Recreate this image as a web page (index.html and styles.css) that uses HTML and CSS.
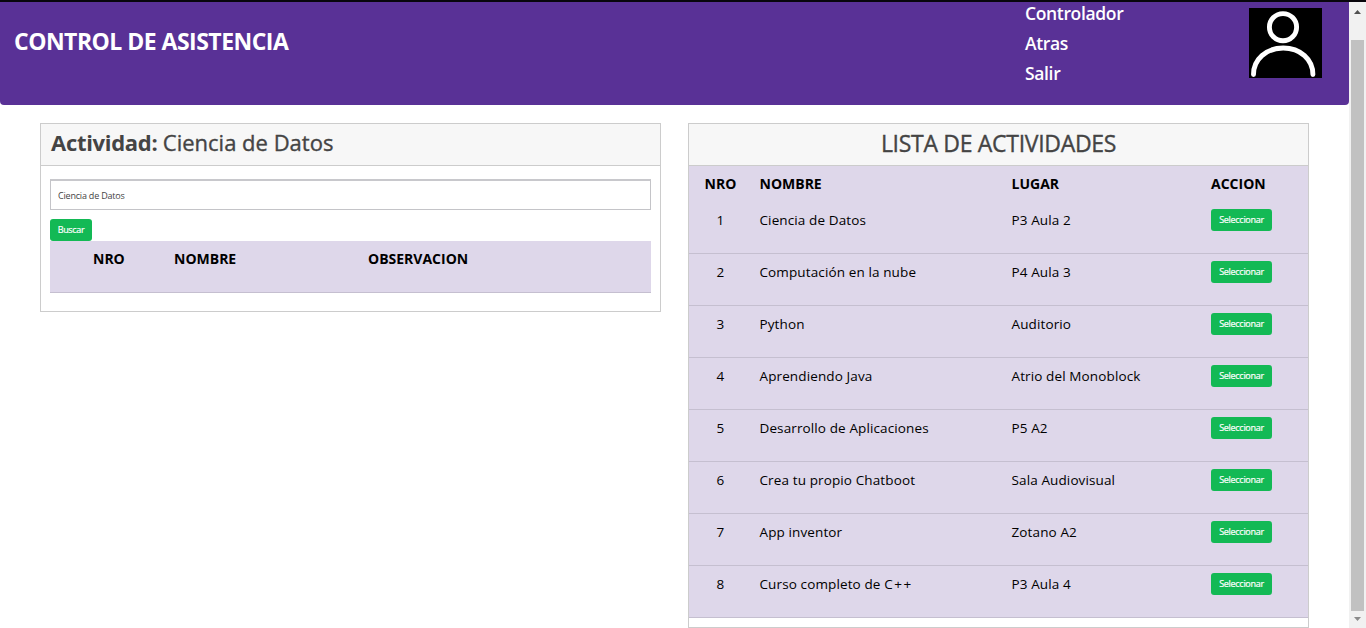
FILE: index.html
```html
<!DOCTYPE html>
<html lang="es">
<head>
<meta charset="utf-8">
<title>Control de Asistencia</title>
<link rel="stylesheet" href="styles.css">
</head>
<body>
<div class="window">
  <div class="page">
    <header class="header">
      <h1 class="title">CONTROL DE ASISTENCIA</h1>
      <nav class="menu">
        <a>Controlador</a>
        <a>Atras</a>
        <a>Salir</a>
      </nav>
      <svg class="avatar" viewBox="0 0 73 70">
        <rect width="73" height="70" fill="#000"/>
        <circle cx="34" cy="19.2" r="13.6" fill="none" stroke="#fff" stroke-width="4.9"/>
        <path d="M4.5 66.5C4.5 51.5 17 40 34.2 40S63.9 51.5 63.9 66.5" fill="none" stroke="#fff" stroke-width="4.9" stroke-linecap="round"/>
      </svg>
    </header>
    <main class="columns">
      <section class="card">
        <h2 class="card-head"><b>Actividad:</b> <span class="activity">Ciencia de Datos</span></h2>
        <div class="card-body">
          <input class="field" type="text" value="Ciencia de Datos">
          <button class="btn btn-search">Buscar</button>
          <div class="attendance">
            <span>NRO</span><span>NOMBRE</span><span>OBSERVACION</span>
          </div>
        </div>
      </section>
      <section class="card">
        <h2 class="card-head centered"><span class="list-title">LISTA DE ACTIVIDADES</span></h2>
        <div class="list">
          <div class="row head"><span class="nro">NRO</span><span>NOMBRE</span><span>LUGAR</span><span>ACCION</span></div>
          <div class="row"><span class="nro">1</span><span>Ciencia de Datos</span><span>P3 Aula 2</span><button class="btn">Seleccionar</button></div>
          <div class="row"><span class="nro">2</span><span>Computación en la nube</span><span>P4 Aula 3</span><button class="btn">Seleccionar</button></div>
          <div class="row"><span class="nro">3</span><span>Python</span><span>Auditorio</span><button class="btn">Seleccionar</button></div>
          <div class="row"><span class="nro">4</span><span>Aprendiendo Java</span><span>Atrio del Monoblock</span><button class="btn">Seleccionar</button></div>
          <div class="row"><span class="nro">5</span><span>Desarrollo de Aplicaciones</span><span>P5 A2</span><button class="btn">Seleccionar</button></div>
          <div class="row"><span class="nro">6</span><span>Crea tu propio Chatboot</span><span>Sala Audiovisual</span><button class="btn">Seleccionar</button></div>
          <div class="row"><span class="nro">7</span><span>App inventor</span><span>Zotano A2</span><button class="btn">Seleccionar</button></div>
          <div class="row"><span class="nro">8</span><span>Curso completo de <span class="lang">C++</span></span><span>P3 Aula 4</span><button class="btn">Seleccionar</button></div>
        </div>
      </section>
    </main>
  </div>
  <div class="scrollbar">
    <svg class="arrow" viewBox="0 0 17 17"><path d="M5 12L8.5 8L12 12Z" fill="#505050"/></svg>
    <div class="thumb"></div>
    <svg class="arrow" viewBox="0 0 17 17"><path d="M5 6L8.5 10L12 6Z" fill="#8b8b8b"/></svg>
  </div>
</div>
</body>
</html>
```
FILE: styles.css
```css
* { box-sizing: border-box; }
body {
  margin: 0;
  background: #fff;
  color: #000;
  font-family: "Open Sans", "Noto Sans", sans-serif;
  font-size: 14px;
}
.window {
  display: flex;
  width: 1366px;
  height: 628px;
  border-top: 2px solid #08060c;
  overflow: hidden;
}
.page { width: 1349px; }
.header {
  display: flex;
  height: 103px;
  background: #593196;
  border-radius: 0 0 4px 4px;
  color: #fff;
}
.title {
  width: 1025px;
  margin: 0;
  padding-left: 14px;
  font-size: 23px;
  font-weight: 700;
  line-height: 78px;
  letter-spacing: -0.52px;
  white-space: nowrap;
}
.menu {
  display: flex;
  flex-direction: column;
  width: 224px;
  margin-top: -4.5px;
  font-size: 17.5px;
  font-weight: 600;
  line-height: 30.4px;
  letter-spacing: -0.35px;
}
.avatar { width: 73px; height: 70px; margin-top: 6px; }
.columns {
  display: grid;
  grid-template-columns: 621px 621px;
  gap: 27px;
  align-items: start;
  padding: 18px 0 0 40px;
}
.card { border: 1px solid #ccc; }
.card-head {
  height: 42px;
  margin: 0;
  padding-left: 10px;
  background: #f7f7f7;
  border-bottom: 1px solid #ccc;
  color: #444;
  font-size: 22px;
  font-weight: 400;
  line-height: 37px;
  letter-spacing: -0.3px;
  white-space: nowrap;
}
.activity { letter-spacing: 0; -webkit-text-stroke: 0.35px #444; }
.list-title { font-size: 23px; letter-spacing: -0.3px; -webkit-text-stroke: 0.35px #444; }
.centered { padding: 0; line-height: 38px; text-align: center; }
.card-body { padding: 13px 9px 18px; }
.field {
  display: block;
  width: 601px;
  height: 31px;
  padding: 0 7px;
  border: 1px solid #c4c4c8;
  border-top: 2px solid #c8c8cc;
  color: #444;
  font: 9px "Open Sans", sans-serif;
  letter-spacing: -0.2px;
}
.btn {
  display: block;
  width: 61px;
  height: 22px;
  padding: 0 0 1px;
  border: 0;
  border-radius: 3px;
  background: #13b955;
  color: #fff;
  font: 9px "Open Sans", sans-serif;
  letter-spacing: -0.28px;
  -webkit-text-stroke: 0.2px #fff;
}
.btn-search { width: 42px; margin-top: 9px; letter-spacing: -0.35px; }
.attendance {
  display: grid;
  grid-template-columns: 81px 194px 1fr;
  height: 52px;
  padding-left: 43px;
  background: #ded7ea;
  border-bottom: 1px solid #c5bfd0;
  font-weight: 700;
  line-height: 36px;
  letter-spacing: 0;
}
.list { padding-bottom: 9px; }
.row {
  display: grid;
  grid-template-columns: 63.5px 252px 199.5px 1fr;
  align-items: start;
  height: 52px;
  padding-left: 7px;
  background: #ded7ea;
  border-bottom: 1px solid #c5bfd0;
  font-size: 13.5px;
  line-height: 36px;
  letter-spacing: 0.12px;
  white-space: nowrap;
}
.head {
  height: 36px;
  border-bottom: 0;
  font-size: 14px;
  font-weight: 700;
  letter-spacing: 0;
}
.nro { width: 49px; text-align: center; }
.lang { letter-spacing: 1.6px; }
.row .btn { margin-top: 7px; }
.scrollbar {
  display: flex;
  flex-direction: column;
  width: 17px;
  background: #f1f1f1;
}
.arrow { width: 17px; height: 17px; }
.thumb { width: 13px; height: 571px; margin: 21px 2px 0; background: #c1c1c1; }
```
